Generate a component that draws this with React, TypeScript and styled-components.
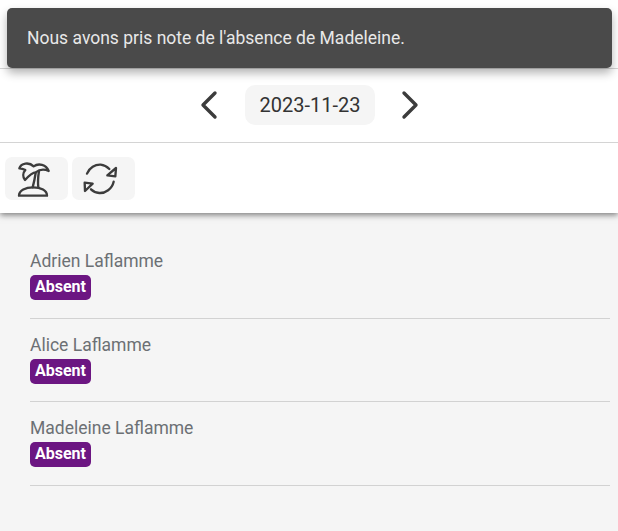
import styled, { createGlobalStyle } from "styled-components"

const Global = createGlobalStyle`
  html, body { margin: 0; padding: 0; }
  body {
    background: #f5f5f5;
    font-family: Roboto, "Liberation Sans", sans-serif;
  }
`

const students = ["Adrien Laflamme", "Alice Laflamme", "Madeleine Laflamme"]

const App = () => {
  return (
    <Page>
      <Global />
      <Toast>Nous avons pris note de l'absence de Madeleine.</Toast>
      <Header>
        <TopBar />
        <DateRow>
          <Arrow viewBox="0 0 24 32">
            <path d="M18 4 L6 16 L18 28" />
          </Arrow>
          <DateChip>2023-11-23</DateChip>
          <Arrow viewBox="0 0 24 32">
            <path d="M5 4 L17 16 L5 28" />
          </Arrow>
        </DateRow>
        <Tools>
          <ToolButton>
            <ToolIcon viewBox="0 0 120 120">
              <path d="M18 110 C18 94 38 85 60 85 C84 85 102 94 102 110 Z" />
              <path d="M59 85 C63 70 66 55 68 42 M76 85 C74 70 75 55 78 36" />
              <path d="M19 28 C24 12 48 8 62 22 C76 12 100 16 107 36 C96 31 80 31 68 40 C60 40 46 52 36 63 C29 54 29 42 37 33 C30 29 25 28 19 28 Z" />
            </ToolIcon>
          </ToolButton>
          <ToolButton>
            <ToolIcon viewBox="0 0 120 120">
              <path d="M21 44 C28 26 46 16 62 17 C72 18 80 22 88 30" />
              <path d="M101 68 C96 90 76 103 58 102 C48 101 40 98 33 91" />
              <path d="M108 27 L106 52 L82 49 Z" />
              <path d="M14 71 L38 74 L15 96 Z" />
            </ToolIcon>
          </ToolButton>
        </Tools>
      </Header>
      <List>
        {students.map((name) => (
          <Item key={name}>
            <Name>{name}</Name>
            <Badge>Absent</Badge>
          </Item>
        ))}
      </List>
    </Page>
  )
}

export default App

const Page = styled.div`
  position: relative;
  min-height: 531px;
  overflow: hidden;
`
const Toast = styled.div`
  position: absolute;
  top: 8px;
  left: 7px;
  right: 6px;
  height: 60px;
  box-sizing: border-box;
  padding: 0 20px;
  display: flex;
  align-items: center;
  background: #4a4a4a;
  color: #e8e8e8;
  font-size: 17.5px;
  border-radius: 5px;
  box-shadow: 0 5px 10px rgba(0, 0, 0, 0.3);
`
const Header = styled.header`
  background: #fff;
  box-shadow: 0 2px 6px rgba(0, 0, 0, 0.5);
`
const TopBar = styled.div`
  height: 68px;
  border-bottom: 1px solid #d4d4d4;
`
const DateRow = styled.div`
  height: 74px;
  box-sizing: border-box;
  padding: 0 0 1px 2px;
  display: flex;
  align-items: center;
  justify-content: center;
  gap: 24px;
  border-bottom: 1px solid #d4d4d4;
`
const Arrow = styled.svg`
  width: 24px;
  height: 32px;
  fill: none;
  stroke: #3c3c3c;
  stroke-width: 3.4;
  stroke-linecap: round;
  stroke-linejoin: round;
`
const DateChip = styled.div`
  width: 130px;
  height: 40px;
  border-radius: 10px;
  background: #f5f5f5;
  color: #333;
  font-size: 20px;
  display: flex;
  align-items: center;
  justify-content: center;
`
const Tools = styled.div`
  height: 70px;
  box-sizing: border-box;
  padding: 14px 5px 0;
  display: flex;
  align-items: flex-start;
  gap: 4px;
`
const ToolButton = styled.div`
  width: 63px;
  height: 43px;
  box-sizing: border-box;
  padding-right: 8px;
  border-radius: 7px;
  background: #f5f5f5;
  display: flex;
  align-items: center;
  justify-content: center;
`
const ToolIcon = styled.svg`
  width: 40px;
  height: 40px;
  fill: none;
  stroke: #3c3c3c;
  stroke-width: 7;
  stroke-linecap: round;
  stroke-linejoin: round;
`
const List = styled.div`
  padding: 22px 8px 0 30px;
`
const Item = styled.div`
  height: 83.5px;
  box-sizing: border-box;
  padding-top: 16px;
  border-bottom: 1px solid #d2d2d2;
`
const Name = styled.div`
  color: #6c7074;
  font-size: 17.5px;
  line-height: 21px;
`
const Badge = styled.span`
  display: block;
  margin-top: 3px;
  height: 25px;
  width: 61px;
  border-radius: 5px;
  background: #6c1682;
  color: #fff;
  font-size: 16px;
  font-weight: 700;
  line-height: 24px;
  text-align: center;
`
